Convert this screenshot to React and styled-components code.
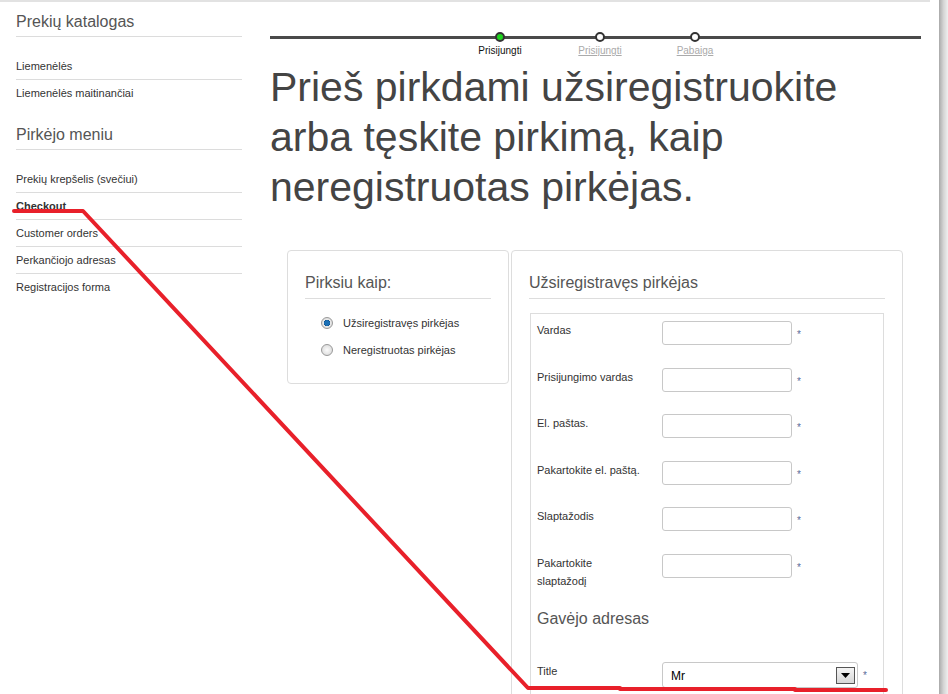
import React from 'react'
import styled, { createGlobalStyle } from 'styled-components'

const GlobalStyle = createGlobalStyle`
  html, body {
    margin: 0;
    padding: 0;
    overflow: hidden;
    background: #fff;
    font-family: "Liberation Sans", Arial, sans-serif;
    color: #333;
  }
`

const catalog = ['Liemenėlės', 'Liemenėlės maitinančiai']
const buyerMenu = [
  { label: 'Prekių krepšelis (svečiui)' },
  { label: 'Checkout', active: true },
  { label: 'Customer orders' },
  { label: 'Perkančiojo adresas' },
  { label: 'Registracijos forma' },
]

const fields = [
  { label: 'Vardas' },
  { label: 'Prisijungimo vardas' },
  { label: 'El. paštas.' },
  { label: 'Pakartokite el. paštą.' },
  { label: 'Slaptažodis' },
  { label: 'Pakartokite slaptažodį', wrap: true },
]

export default function App() {
  return (
    <>
      <GlobalStyle />
      <Page>
        <Frame>
          <Sidebar>
            <SideHeading>Prekių katalogas</SideHeading>
            <SideList>
              {catalog.map((item) => (
                <SideItem key={item}>{item}</SideItem>
              ))}
            </SideList>
            <SideHeading $spaced>Pirkėjo meniu</SideHeading>
            <SideList>
              {buyerMenu.map((item) => (
                <SideItem key={item.label} $active={item.active}>
                  {item.label}
                </SideItem>
              ))}
            </SideList>
          </Sidebar>

          <Main>
            <Steps>
              <Step $offset={200}>
                <Dot $done />
                <StepLabel $current>Prisijungti</StepLabel>
              </Step>
              <Step $offset={40}>
                <Dot />
                <StepLabel>Prisijungti</StepLabel>
              </Step>
              <Step $offset={35}>
                <Dot />
                <StepLabel>Pabaiga</StepLabel>
              </Step>
            </Steps>

            <Title>
              Prieš pirkdami užsiregistruokite
              <br />
              arba tęskite pirkimą, kaip
              <br />
              neregistruotas pirkėjas.
            </Title>

            <Panels>
              <ChoicePanel>
                <PanelHeading>Pirksiu kaip:</PanelHeading>
                <RadioList>
                  <RadioRow>
                    <Radio $checked />
                    Užsiregistravęs pirkėjas
                  </RadioRow>
                  <RadioRow>
                    <Radio />
                    Neregistruotas pirkėjas
                  </RadioRow>
                </RadioList>
              </ChoicePanel>

              <FormPanel>
                <PanelHeading>Užsiregistravęs pirkėjas</PanelHeading>
                <FormBox>
                  {fields.map((f) => (
                    <FieldRow key={f.label}>
                      <FieldLabel $wrap={f.wrap}>{f.label}</FieldLabel>
                      <TextInput />
                      <Required>*</Required>
                    </FieldRow>
                  ))}
                  <SubHeading>Gavėjo adresas</SubHeading>
                  <FieldRow $select>
                    <FieldLabel>Title</FieldLabel>
                    <SelectBox>
                      Mr
                      <SelectArrow>
                        <svg width="9" height="5" viewBox="0 0 9 5">
                          <path d="M0 0 H9 L4.5 5 Z" fill="#000" />
                        </svg>
                      </SelectArrow>
                    </SelectBox>
                    <Required>*</Required>
                  </FieldRow>
                </FormBox>
              </FormPanel>
            </Panels>
          </Main>
        </Frame>
        <EdgeShadow />
        <Annotation width="948" height="694" viewBox="0 0 948 694">
          <polyline
            points="14,211 83,211 528,688 620,688 620,689 795,689 795,690 886,690"
            fill="none"
            stroke="#e8202a"
            strokeWidth="4"
            strokeLinejoin="round"
            strokeLinecap="round"
          />
        </Annotation>
      </Page>
    </>
  )
}

const Page = styled.div`
  position: relative;
  display: flex;
  width: 948px;
  height: 694px;
  overflow: hidden;
`

const Frame = styled.div`
  display: flex;
  width: 939px;
  gap: 28px;
  background: linear-gradient(#e2e2e2, #e2e2e2) no-repeat 0 0 / 930px 2px;
`

const EdgeShadow = styled.div`
  width: 9px;
  background: linear-gradient(to right, #a9a9a9, #d4d4d4 50%, #efefef);
`

const Sidebar = styled.nav`
  width: 226px;
  flex-shrink: 0;
  padding: 12px 0 0 16px;
`

const SideHeading = styled.h2`
  margin: ${(p) => (p.$spaced ? '19px' : '0')} 0 0;
  padding-bottom: 4px;
  border-bottom: 1px solid #dcdcdc;
  font-size: 16px;
  line-height: 20px;
  font-weight: normal;
  color: #555;
`

const SideList = styled.ul`
  list-style: none;
  margin: 16px 0 0;
  padding: 0;
`

const SideItem = styled.li`
  height: 26px;
  line-height: 26px;
  font-size: 11px;
  color: #333;
  font-weight: ${(p) => (p.$active ? 'bold' : 'normal')};
  border-bottom: 1px solid #dcdcdc;

  &:last-child {
    border-bottom: none;
  }
`

const Main = styled.main`
  width: 651px;
  flex-shrink: 0;
`

const Steps = styled.div`
  display: flex;
  height: 62px;
  padding-top: 32px;
  box-sizing: border-box;
  background: linear-gradient(#4a4a4a, #4a4a4a) no-repeat 0 36px / 100% 3px;
`

const Step = styled.div`
  width: 60px;
  margin-left: ${(p) => p.$offset}px;
  display: flex;
  flex-direction: column;
  align-items: center;
`

const Dot = styled.span`
  width: 10px;
  height: 10px;
  box-sizing: border-box;
  border-radius: 50%;
  border: 2px solid #333;
  background: ${(p) => (p.$done ? '#1ed51e' : '#fff')};
`

const StepLabel = styled.span`
  margin-top: 3px;
  font-size: 10px;
  line-height: 12px;
  white-space: nowrap;
  color: ${(p) => (p.$current ? '#111' : '#aaa')};
  text-decoration: ${(p) => (p.$current ? 'none' : 'underline')};
`

const Title = styled.h1`
  margin: 0;
  font-size: 41px;
  line-height: 50px;
  font-weight: normal;
  color: #444;
`

const Panels = styled.div`
  display: flex;
  align-items: flex-start;
  gap: 2px;
  margin-top: 38px;
  padding-left: 17px;
`

const Panel = styled.section`
  box-sizing: border-box;
  border: 1px solid #ddd;
  border-radius: 4px;
  padding: 22px 17px 0;
`

const ChoicePanel = styled(Panel)`
  width: 222px;
  height: 134px;
`

const FormPanel = styled(Panel)`
  width: 392px;
  height: 560px;
`

const PanelHeading = styled.h3`
  margin: 0;
  padding-bottom: 5px;
  border-bottom: 1px solid #ddd;
  font-size: 16px;
  line-height: 20px;
  font-weight: normal;
  color: #555;
`

const RadioList = styled.div`
  margin-top: 10px;
  padding-left: 16px;
`

const RadioRow = styled.label`
  display: flex;
  align-items: center;
  gap: 10px;
  height: 27px;
  font-size: 11px;
  color: #333;
`

const Radio = styled.span`
  width: 12px;
  height: 12px;
  box-sizing: border-box;
  border-radius: 50%;
  border: 1px solid #999;
  background: ${(p) =>
    p.$checked
      ? 'radial-gradient(circle, #1a6fb5 0 2.5px, #0d4f88 3px, #e8e8e8 3.5px, #d0d0d0 100%)'
      : 'radial-gradient(circle, #fbfbfb 0, #e4e4e4 60%, #cfcfcf 100%)'};
`

const FormBox = styled.div`
  margin: 14px 1px 0;
  border: 1px solid #ddd;
  padding: 7px 6px 20px;
  height: 600px;
  box-sizing: border-box;
`

const FieldRow = styled.div`
  display: flex;
  align-items: flex-start;
  margin-bottom: 22.6px;
  margin-top: ${(p) => (p.$select ? '33px' : '0')};
`

const FieldLabel = styled.div`
  width: 125px;
  flex-shrink: 0;
  font-size: 11px;
  line-height: 18px;
  color: #333;
  padding-right: ${(p) => (p.$wrap ? '50px' : '0')};
  box-sizing: border-box;
`

const TextInput = styled.input`
  width: 130px;
  height: 24px;
  box-sizing: border-box;
  border: 1px solid #c8c8c8;
  border-radius: 3px;
  background: #fff;
  margin: 0;
`

const Required = styled.span`
  margin: 9px 0 0 5px;
  font-size: 10px;
  line-height: 10px;
  color: #5b6c9a;
`

const SubHeading = styled.h4`
  margin: -4px 0 0;
  font-size: 16px;
  line-height: 20px;
  font-weight: normal;
  color: #555;
`

const SelectBox = styled.div`
  width: 196px;
  height: 26px;
  box-sizing: border-box;
  border: 1px solid #c8c8c8;
  border-radius: 3px;
  display: flex;
  align-items: center;
  justify-content: space-between;
  padding: 2px 2px 0 8px;
  font-size: 12px;
  color: #000;
`

const SelectArrow = styled.span`
  width: 19px;
  height: 17px;
  box-sizing: border-box;
  border: 1px solid #555;
  background: linear-gradient(#f4f4f4, #d6d6d6);
  display: flex;
  align-items: center;
  justify-content: center;
`

const Annotation = styled.svg`
  position: absolute;
  left: 0;
  top: 0;
  pointer-events: none;
`
